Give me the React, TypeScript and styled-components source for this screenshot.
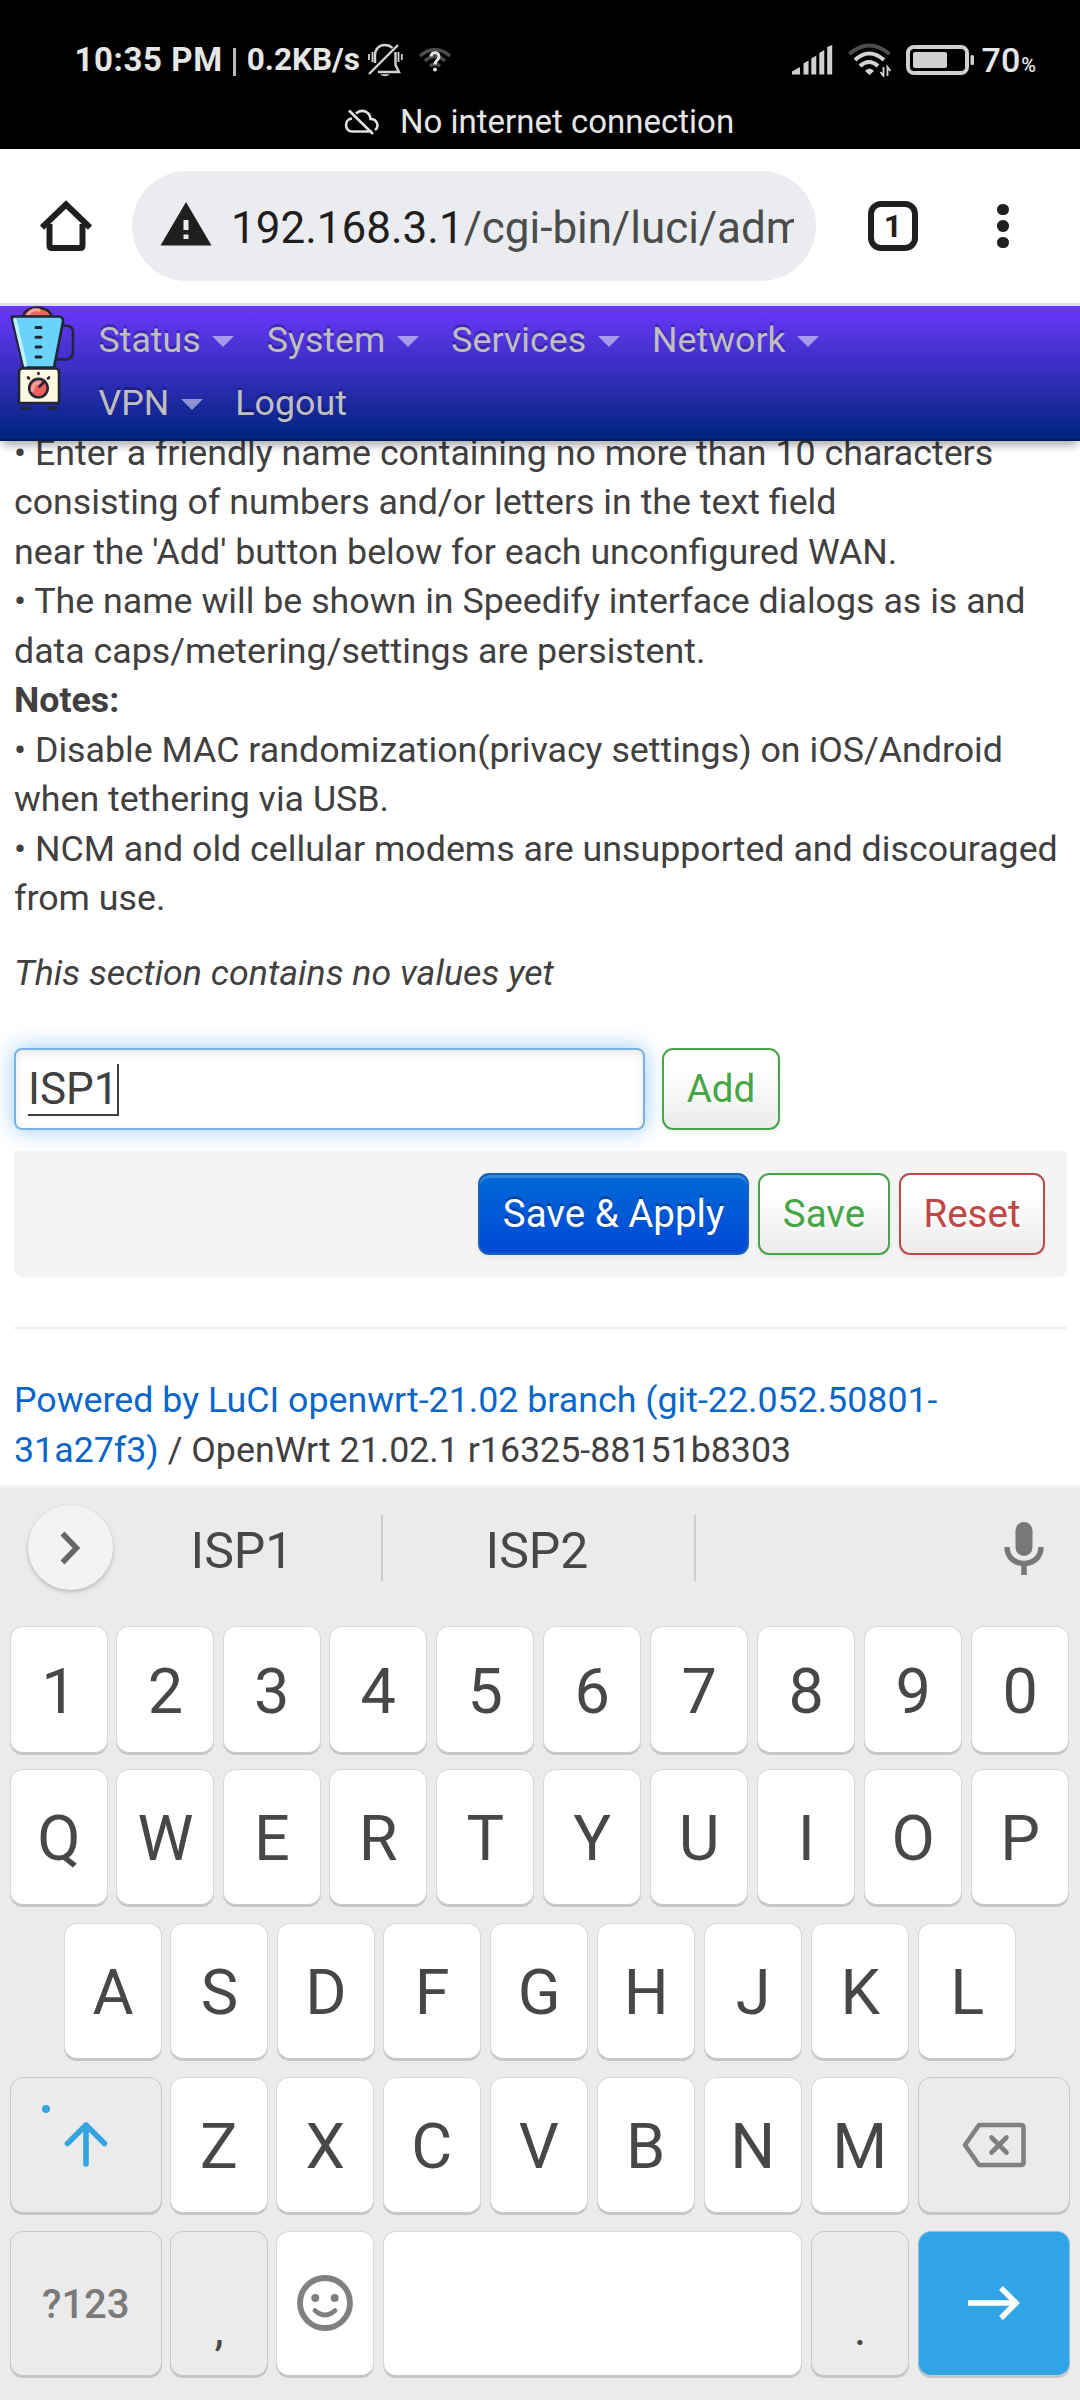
import React from "react";
import styled, { createGlobalStyle } from "styled-components";

const Global = createGlobalStyle`
  html, body { margin: 0; padding: 0; background: #fff; }
  * { box-sizing: border-box; }
  body { font-family: Roboto, "Liberation Sans", sans-serif; color: #404040; overflow: hidden; }
  svg { display: block; flex: none; }
`;

const Screen = styled.div`
  width: 1080px;
  height: 2400px;
  display: flex;
  flex-direction: column;
  overflow: hidden;
  background: #fff;
`;

/* ---------- system status bar ---------- */
const StatusBar = styled.div`
  height: 149px;
  background: #000;
  color: #e6e6e6;
  flex: none;
`;
const StatusRow = styled.div`
  height: 90px;
  padding: 29px 44px 0 74.5px;
  display: flex;
  align-items: center;
  justify-content: space-between;
`;
const Cluster = styled.div`
  display: flex;
  align-items: center;
`;
const StatusText = styled.span<{ $size: number; $weight?: number; $ls?: number; $ml?: number; $dy?: number }>`
  font-size: ${(p) => p.$size}px;
  font-weight: ${(p) => p.$weight ?? 700};
  letter-spacing: ${(p) => p.$ls ?? 0}px;
  margin-left: ${(p) => p.$ml ?? 0}px;
  padding-top: ${(p) => p.$dy ?? 1}px;
  line-height: 40px;
  white-space: pre;
`;
const StatusIcon = styled.svg<{ $ml: number }>`
  margin-left: ${(p) => p.$ml}px;
`;
const Divider = styled.span`
  width: 3px;
  height: 28px;
  margin: 4px 11px 0 10px;
  background: #b9b9b9;
`;
const Notice = styled.div`
  height: 59px;
  display: flex;
  align-items: center;
  padding: 4px 0 0 344px;
  gap: 20px;
  font-size: 33px;
  line-height: 55px;
`;

/* ---------- browser toolbar ---------- */
const Toolbar = styled.div`
  flex: none;
  height: 157px;
  padding-left: 40px;
  border-bottom: 3px solid #e0e1e1;
  display: flex;
  align-items: center;
  background: #fff;
`;
const Omnibox = styled.div`
  width: 684px;
  height: 110px;
  margin-left: 40px;
  padding: 0 22px 0 28px;
  border-radius: 55px;
  background: #ebecf0;
  display: flex;
  align-items: center;
  gap: 19px;
`;
const Url = styled.div`
  flex: 1;
  overflow: hidden;
  white-space: nowrap;
  font-size: 44px;
  line-height: 60px;
  padding-top: 4px;
  color: #494c4b;
`;
const Host = styled.span`
  color: #1f1f1f;
`;
const TabCount = styled.div`
  width: 50px;
  height: 50px;
  margin-left: 52px;
  border: 6px solid #1f1f1f;
  border-radius: 13px;
  display: flex;
  align-items: center;
  justify-content: center;
  font-size: 32px;
  font-weight: 700;
  color: #1f1f1f;
`;
const Kebab = styled.div`
  margin-left: 79px;
  display: flex;
  flex-direction: column;
  gap: 5px;
`;
const Dot = styled.span`
  width: 11.5px;
  height: 11.5px;
  border-radius: 50%;
  background: #1f1f1f;
`;

/* ---------- router admin page ---------- */
const Header = styled.header`
  flex: none;
  height: 135px;
  position: relative;
  z-index: 1;
  display: flex;
  background: linear-gradient(#6b38fc, #00247f);
  border-bottom: 2px solid #041b5a;
  box-shadow: 0 6px 9px -2px rgba(0, 0, 0, 0.35);
`;
const Nav = styled.nav`
  width: 800px;
  margin-left: 22.5px;
  display: flex;
  flex-wrap: wrap;
  align-content: flex-start;
  column-gap: 32.5px;
`;
const NavItem = styled.a`
  display: flex;
  align-items: center;
  height: 63px;
  padding-top: 6px;
  font-size: 35.75px;
  line-height: 49.5px;
  color: #bfbfbf;
  text-shadow: 0 -2.75px 0 rgba(0, 0, 0, 0.25);
`;
const Caret = styled.span`
  margin: 2px 0 0 11.5px;
  border: 11px solid transparent;
  border-top-color: #fff;
  border-bottom: 0;
  opacity: 0.5;
`;
const Page = styled.main`
  flex: none;
  height: 1061px;
  margin-top: -14px;
  padding: 1.5px 13px 0 14px;
  font-size: 35.75px;
  line-height: 49.5px;
`;
const Placeholder = styled.div`
  margin-top: 25px;
  font-style: italic;
`;
const AddRow = styled.div`
  display: flex;
  gap: 17px;
  margin-top: 49.5px;
`;
const NameField = styled.div`
  width: 631px;
  height: 82px;
  padding: 14px 12px 0;
  border: 2px solid #7ab3e3;
  border-radius: 8px;
  background: #fff;
  box-shadow: inset 0 3px 8px rgba(0, 0, 0, 0.1), 0 0 22px rgba(82, 168, 236, 0.6);
  font-size: 44px;
  line-height: 50px;
`;
const Typed = styled.span`
  display: block;
  width: 91px;
  height: 52px;
  border-bottom: 2px solid #404040;
  border-right: 2px solid #404040;
`;
const Button = styled.div<{ $tone: "green" | "red" | "primary"; $w: number }>`
  width: ${(p) => p.$w}px;
  height: 82px;
  display: flex;
  justify-content: center;
  font-size: 38.5px;
  line-height: 77px;
  border-radius: 11px;
  border: 2px solid ${(p) => ({ green: "#46a546", red: "#b94a48", primary: "#1562b8" })[p.$tone]};
  color: ${(p) => ({ green: "#46a546", red: "#bd4846", primary: "#fff" })[p.$tone]};
  background: ${(p) =>
    p.$tone === "primary" ? "linear-gradient(#0069d6, #0048d6)" : "linear-gradient(#fff, #fff 25%, #ebebeb)"};
  text-shadow: ${(p) => (p.$tone === "primary" ? "0 -2.75px 0 rgba(0,0,0,.25)" : "0 2.75px 2.75px rgba(255,255,255,.75)")};
  box-shadow: inset 0 3px 0 rgba(255, 255, 255, 0.2), 0 3px 5px rgba(0, 0, 0, 0.05);
`;
const Actions = styled.div`
  margin-top: 21px;
  height: 126px;
  padding: 22px;
  display: flex;
  justify-content: flex-end;
  gap: 9px;
  border-radius: 0 0 8px 8px;
  background: #f4f4f4;
`;
const Footer = styled.footer`
  margin-top: 50px;
  padding-top: 47.5px;
  border-top: 2px solid #eee;
`;
const Link = styled.a`
  color: #0a66c8;
`;

/* ---------- keyboard ---------- */
const Keyboard = styled.div`
  position: relative;
  flex: 1;
  padding: 0 10px;
  background: #ebebeb;
  color: #474747;
  box-shadow: 0 -1px 5px rgba(0, 0, 0, 0.12);
`;
const Suggestions = styled.div`
  height: 138px;
  padding: 0 26px 19px 17.5px;
  display: flex;
  align-items: center;
  font-size: 50px;
`;
const Expand = styled.div`
  width: 85px;
  height: 85px;
  border-radius: 50%;
  background: #f3f3f3;
  box-shadow: 0 2px 4px rgba(0, 0, 0, 0.22);
  display: flex;
  align-items: center;
  justify-content: center;
`;
const Suggestion = styled.div<{ $w: number; $pr: number }>`
  width: ${(p) => p.$w}px;
  height: 66px;
  padding-right: ${(p) => p.$pr}px;
  line-height: 73px;
  border-right: 2px solid #cdcdcd;
  text-align: center;
`;
const Spring = styled.div`
  flex: 1;
`;
const Rows = styled.div`
  display: flex;
  flex-direction: column;
  gap: 16px;
`;
const Key = styled.div<{ $kind?: "plain" | "soft" | "go"; $w?: number; $grow?: boolean }>`
  position: relative;
  width: ${(p) => p.$w ?? 98}px;
  flex: ${(p) => (p.$grow ? "1" : "none")};
  margin-bottom: 2px;
  border-radius: 13px;
  border: 1px solid ${(p) => (p.$kind === "soft" ? "#c8c8c8" : p.$kind === "go" ? "#8fbfdc" : "#d8d8d8")};
  border-bottom-color: #c8c8c8;
  box-shadow: 0 2px 0 #c6c6c6;
  background: ${(p) => (p.$kind === "soft" ? "#ebebeb" : p.$kind === "go" ? "#2fa5e5" : "#fff")};
  display: flex;
  align-items: center;
  justify-content: center;
  font-size: 63px;
  line-height: 74px;
  padding-top: 3px;

  > svg {
    margin-bottom: 4px;
  }
`;
const KeyRow = styled.div<{ $h: number; $inset?: number }>`
  height: ${(p) => p.$h}px;
  padding: 0 ${(p) => p.$inset ?? 0}px;
  display: flex;
  gap: 9px;

  ${Key}:nth-child(-n + 3) {
    margin-right: -0.6px;
  }
`;
const DigitRow = styled(KeyRow)`
  margin-bottom: -2px;

  ${Key} {
    padding-top: 5px;
  }
`;
const ModeLabel = styled.span`
  font-size: 40px;
  font-weight: 500;
  color: #7a7a7a;
`;
const Punct = styled.span`
  align-self: flex-end;
  font-size: 46px;
  line-height: 46px;
  padding-bottom: 23px;
`;
const CapsDot = styled.span`
  position: absolute;
  left: 31px;
  top: 27px;
  width: 8px;
  height: 8px;
  border-radius: 50%;
  background: #35a4e0;
`;

const BellOff = () => (
  <StatusIcon $ml={7} width="36" height="34" viewBox="0 0 36 34" fill="none" stroke="#d2d2d2" strokeWidth="2.4">
    <path d="M8 20V12.500C8 6 12 2 18 2c3 0 5.500 1 7.500 3M28.500 9v13l3.500 7H11M2 31L31 2" />
    <path d="M2 11v6M5.500 9v10M31.500 9v10M34.800 11v6" strokeWidth="1.800" />
    <path d="M13 31.300h10q-5 4-10 0" fill="#d2d2d2" stroke="none" />
  </StatusIcon>
);
const WifiUnknown = () => (
  <StatusIcon $ml={15} width="34" height="28" viewBox="0 0 34 28" fill="none" stroke="#4d4d4d" strokeWidth="3.500">
    <path d="M2 10Q17-3 32 10M7 15Q17 6 27 15M12 20Q17 16 22 20" />
    <path d="M13 10.500c0-5 8-5 8 0 0 4-4 3.500-4 8" stroke="#e6e6e6" strokeWidth="3" />
    <circle cx="17" cy="23.500" r="2" fill="#e6e6e6" stroke="none" />
  </StatusIcon>
);
const Signal = () => (
  <svg width="42" height="30" viewBox="0 0 42 30" fill="#d0d0d0">
    <path d="M0 29.500v-3l8-4.500v7.500zM11.500 29.500V18.500l5-3V29.500zM19.300 29.500V13.500l5-3V29.500zM27.300 29.500V8l5-3V29.500zM35.200 29.500V2l5-2V29.500z" />
  </svg>
);
const Wifi = () => (
  <StatusIcon $ml={14} width="43" height="34" viewBox="0 0 43 34" fill="none" stroke="#d4d4d4" strokeWidth="4">
    <path d="M1.500 11Q21-6 41.500 11" stroke="#4d4d4d" />
    <path d="M7 17Q21 4 36 17M12 23Q21 15 30 23" />
    <path d="M17 28q4.500-5 9 0l-4.500 4z" fill="#d4d4d4" stroke="none" />
    <path d="M35.500 24v9l-3-4M39.500 33v-9l3 4" strokeWidth="1.800" />
  </StatusIcon>
);
const Battery = () => (
  <StatusIcon $ml={15} width="70" height="30" viewBox="0 0 70 30">
    <rect x="2" y="2" width="59" height="26" rx="6" fill="none" stroke="#d0d0d0" strokeWidth="4" />
    <rect x="7" y="7" width="34" height="16" rx="2" fill="#d0d0d0" />
    <rect x="64.500" y="10" width="3.500" height="10" rx="1.500" fill="#d0d0d0" />
  </StatusIcon>
);
const CloudOff = () => (
  <svg width="36" height="26" viewBox="0 0 36 26" fill="none" stroke="#e0e0e0" strokeWidth="2.600">
    <path d="M28 22.500H8.500C0 22.500 0 10 8 9.500M12 4.500C18-1 26 3 26.500 10c7 0 9 8 4.500 11M5 1.500L29 25" />
  </svg>
);
const Home = () => (
  <svg width="52" height="52" viewBox="0 0 52 52" fill="none" stroke="#1f1f1f" strokeWidth="6" strokeLinejoin="round">
    <path d="M9.500 24V45.500q0 2.500 2.500 2.500H40q2.500 0 2.500-2.500V24" />
    <path d="M2 27.500L26 4.500L50 27.500" strokeLinejoin="miter" />
  </svg>
);
const Warning = () => (
  <svg width="52" height="48" viewBox="0 0 52 48">
    <path d="M26 0L51.500 43.500H.5z" fill="#1f1f1f" />
    <path d="M23.500 18h5v10h-5zM23.500 32.500h5v4.500h-5z" fill="#ebecf0" />
  </svg>
);
const Blender = () => (
  <StatusIcon $ml={10} width="66" height="106" viewBox="0 0 66 106" stroke="#222533" strokeWidth="2.600" strokeLinejoin="round" strokeLinecap="round">
    <path d="M13 11C15-1.500 39-1.500 42 11z" fill="#ee6561" />
    <path d="M18 8.500c2-4 6-5.500 11-4.500" fill="none" stroke="#f4a5a0" strokeWidth="3" />
    <path d="M1.500 10.500H49q4 0 4 5l-9 46H13.500z" fill="#69d3fc" />
    <path d="M5 14l10.500 45" stroke="#c2effe" strokeWidth="3.500" />
    <path d="M54 19.500q9 0 9 6v20q0 8-8 8h-7" fill="none" />
    <path d="M26 21.500h5M26 31.300h5M26 41h5M26 51h5" strokeWidth="3" />
    <path d="M12 62.500h34q3 0 3 5v29.500H9V67.500q0-5 3-5z" fill="#fffbe0" />
    <path d="M11 102.200h8.500M38 102.200h8.500" strokeWidth="3" />
    <circle cx="28.500" cy="82.200" r="9.300" fill="#ec5e5b" />
    <path d="M22.500 84a7 7 0 0 1 7-7.500" fill="none" stroke="#f49a96" strokeWidth="4" />
    <path d="M29.500 80.500l4-4M28.500 67v1M18 71.500l1 1M39 71.500l-1 1" />
  </StatusIcon>
);
const Chevron = () => (
  <svg width="20" height="36" viewBox="0 0 20 36" fill="none" stroke="#666" strokeWidth="5.500">
    <path d="M2.500 3.500L16.500 18L2.500 32.500" />
  </svg>
);
const Mic = () => (
  <svg width="40" height="54" viewBox="0 0 40 54" fill="none" stroke="#787878">
    <rect x="11.500" y="1" width="17" height="34" rx="8.500" fill="#787878" stroke="none" />
    <path d="M3 26c0 22 34 22 34 0M20 42v12" strokeWidth="5.500" />
  </svg>
);
const ShiftArrow = () => (
  <svg width="44" height="46" viewBox="0 0 44 46" fill="none" stroke="#35a4e0" strokeWidth="5.600" strokeLinecap="round" strokeLinejoin="round">
    <path d="M22 42V3M3.500 21.500L22 3l18.500 18.500" />
  </svg>
);
const Backspace = () => (
  <svg width="66" height="46" viewBox="0 0 66 46" fill="none" stroke="#808080" strokeWidth="4.600" strokeLinejoin="round" strokeLinecap="round">
    <path d="M18 3h42q2.500 0 2.500 2.500v35q0 2.500-2.500 2.500H18L4 23z" />
    <path d="M30.500 15.500l15 15M45.500 15.500l-15 15" />
  </svg>
);
const Smiley = () => (
  <svg width="56" height="56" viewBox="0 0 56 56" fill="none" stroke="#808080" strokeWidth="5.800">
    <circle cx="28" cy="28" r="25" />
    <path d="M18 35.500q10 9 20 0" strokeWidth="4.800" strokeLinecap="round" />
    <circle cx="18.300" cy="23" r="4" fill="#808080" stroke="none" />
    <circle cx="37.700" cy="23" r="4" fill="#808080" stroke="none" />
  </svg>
);
const GoArrow = () => (
  <svg width="54" height="36" viewBox="0 0 54 36" fill="none" stroke="#fff" strokeWidth="5.500">
    <path d="M1 18H49M34 3l15 15-15 15" />
  </svg>
);

const keys = (s: string) => s.split("").map((c) => <Key key={c}>{c}</Key>);

export default function App() {
  return (
    <Screen>
      <Global />
      <StatusBar>
        <StatusRow>
          <Cluster>
            <StatusText $size={33} $ls={0.6}>10:35 PM</StatusText>
            <Divider />
            <StatusText $size={31.5}>0.2KB/s</StatusText>
            <BellOff />
            <WifiUnknown />
          </Cluster>
          <Cluster>
            <Signal />
            <Wifi />
            <Battery />
            <StatusText $size={34} $weight={500} $ml={6}>70</StatusText>
            <StatusText $size={20} $weight={500} $ml={1} $dy={11}>%</StatusText>
          </Cluster>
        </StatusRow>
        <Notice>
          <CloudOff />
          <span>No internet connection</span>
        </Notice>
      </StatusBar>

      <Toolbar>
        <Home />
        <Omnibox>
          <Warning />
          <Url><Host>192.168.3.1</Host>/cgi-bin/luci/adm</Url>
        </Omnibox>
        <TabCount>1</TabCount>
        <Kebab><Dot /><Dot /><Dot /></Kebab>
      </Toolbar>

      <Header>
        <Blender />
        <Nav>
          {["Status", "System", "Services", "Network", "VPN"].map((n) => (
            <NavItem key={n}>{n}<Caret /></NavItem>
          ))}
          <NavItem>Logout</NavItem>
        </Nav>
      </Header>

      <Page>
        <div>
          • Enter a friendly name containing no more than 10 characters<br />
          consisting of numbers and/or letters in the text field<br />
          near the 'Add' button below for each unconfigured WAN.<br />
          • The name will be shown in Speedify interface dialogs as is and<br />
          data caps/metering/settings are persistent.<br />
          <b>Notes:</b><br />
          • Disable MAC randomization(privacy settings) on iOS/Android<br />
          when tethering via USB.<br />
          • NCM and old cellular modems are unsupported and discouraged<br />
          from use.
        </div>
        <Placeholder>This section contains no values yet</Placeholder>
        <AddRow>
          <NameField><Typed>ISP1</Typed></NameField>
          <Button $tone="green" $w={118}>Add</Button>
        </AddRow>
        <Actions>
          <Button $tone="primary" $w={271}>Save &amp; Apply</Button>
          <Button $tone="green" $w={132}>Save</Button>
          <Button $tone="red" $w={146}>Reset</Button>
        </Actions>
        <Footer>
          <Link>Powered by LuCI openwrt-21.02 branch (git-22.052.50801-<br />31a27f3)</Link> / OpenWrt 21.02.1 r16325-88151b8303
        </Footer>
      </Page>

      <Keyboard>
        <Suggestions>
          <Expand><Chevron /></Expand>
          <Suggestion $w={270} $pr={9}>ISP1</Suggestion>
          <Suggestion $w={313} $pr={2}>ISP2</Suggestion>
          <Spring />
          <Mic />
        </Suggestions>
        <Rows>
          <DigitRow $h={129}>{keys("1234567890")}</DigitRow>
          <KeyRow $h={138}>{keys("QWERTYUIOP")}</KeyRow>
          <KeyRow $h={138} $inset={54}>{keys("ASDFGHJKL")}</KeyRow>
          <KeyRow $h={138}>
            <Key $kind="soft" $w={151.5}><CapsDot /><ShiftArrow /></Key>
            {keys("ZXCVBNM")}
            <Key $kind="soft" $w={152}><Backspace /></Key>
          </KeyRow>
          <KeyRow $h={147}>
            <Key $kind="soft" $w={151.5}><ModeLabel>?123</ModeLabel></Key>
            <Key $kind="soft"><Punct>,</Punct></Key>
            <Key><Smiley /></Key>
            <Key $grow />
            <Key $kind="soft"><Punct>.</Punct></Key>
            <Key $kind="go" $w={152}><GoArrow /></Key>
          </KeyRow>
        </Rows>
      </Keyboard>
    </Screen>
  );
}
